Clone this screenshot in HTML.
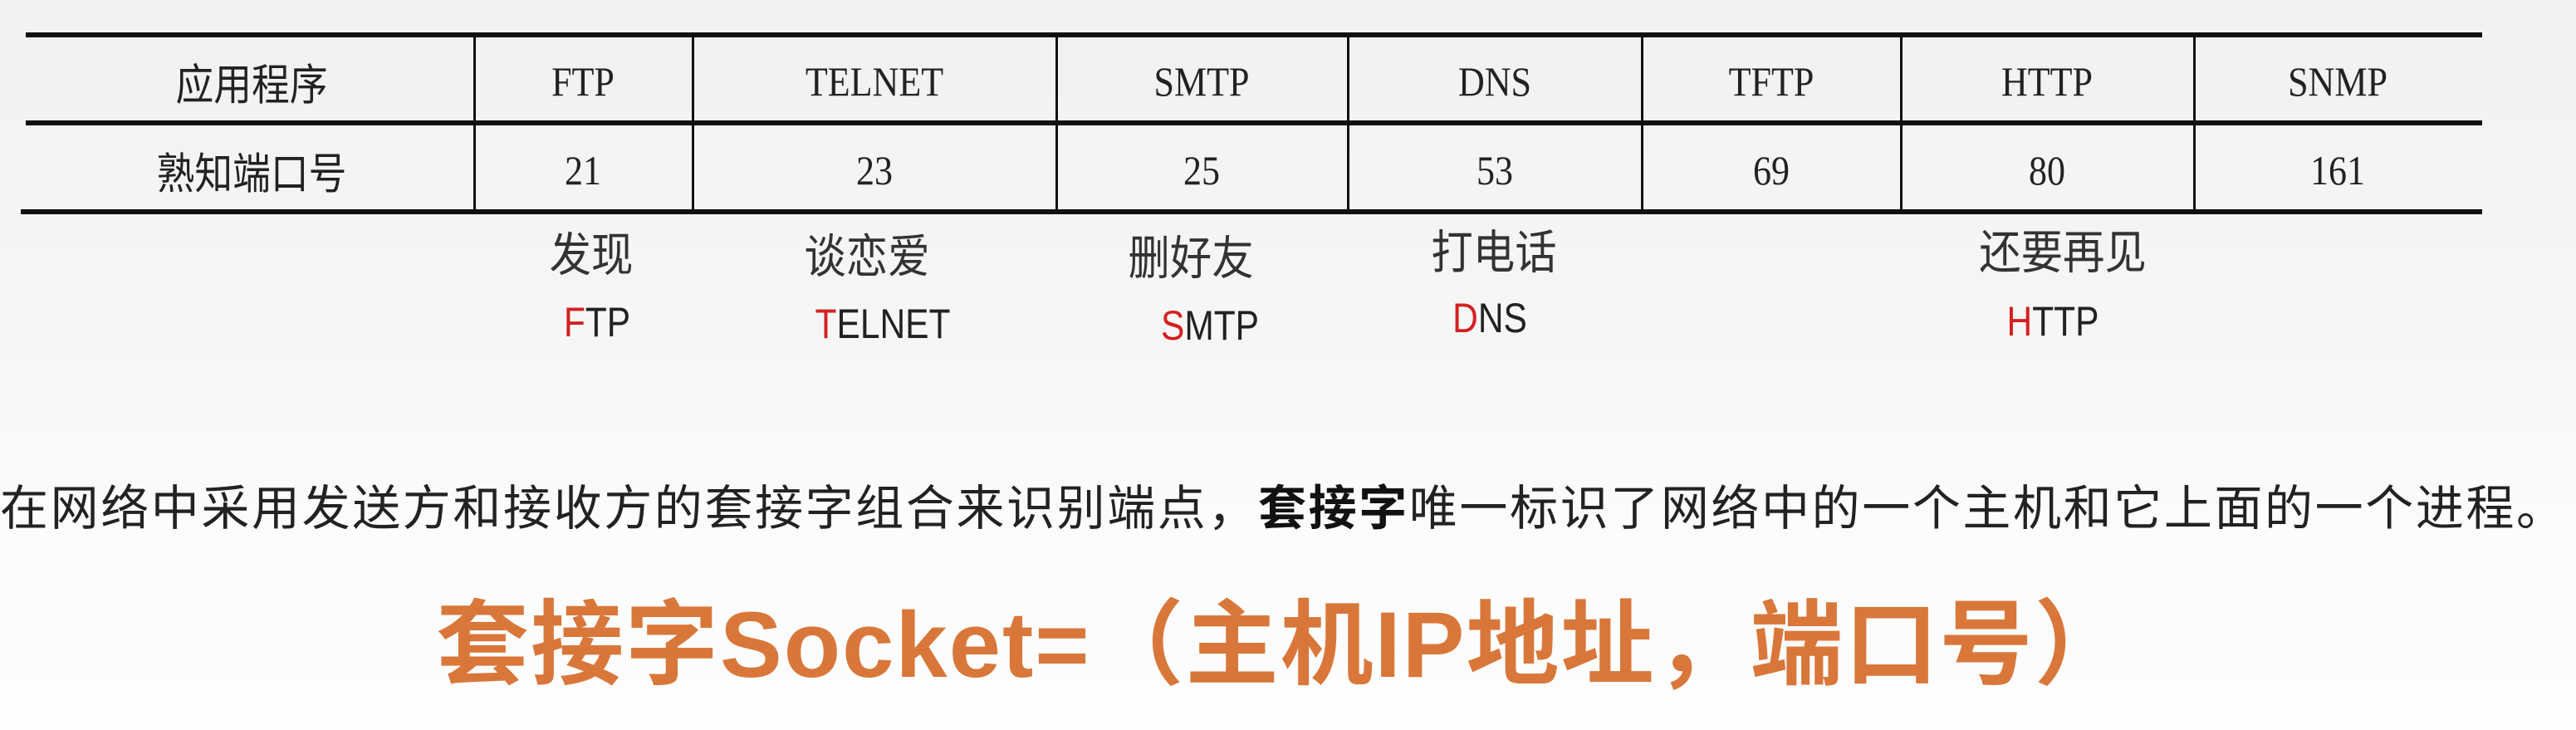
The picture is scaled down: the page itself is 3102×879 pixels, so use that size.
<!DOCTYPE html>
<html><head><meta charset="utf-8"><style>
body{margin:0;width:3102px;height:879px;overflow:hidden;background:linear-gradient(#f1f1f1,#f6f6f6 45%,#fcfcfc 75%,#fdfdfd);position:relative;font-family:"Liberation Sans","Noto Sans CJK SC",sans-serif;}
.h{position:absolute;background:#111;height:6px;left:31px;width:2958px}
.v{position:absolute;background:#111;width:3px;top:42px;height:213px}
.t{position:absolute;transform:translate(-50%,-50%) scaleX(0.88);white-space:nowrap;color:#222;font-size:50px;font-family:"Liberation Serif","Noto Sans CJK SC",serif;}
.c{font-family:"Liberation Sans","Noto Sans CJK SC",sans-serif;font-size:52px;}
.m{position:absolute;transform:translate(-50%,-50%) scaleX(0.9);white-space:nowrap;color:#333;font-size:56px;}
.r{position:absolute;transform:translate(-50%,-50%) scaleX(0.85);white-space:nowrap;color:#222;font-size:50px;}
.r b{color:#d42020;font-weight:normal}
</style></head><body>
<div class="h" style="top:39px"></div>
<div class="h" style="top:145px"></div>
<div class="h" style="top:252px;left:25px;width:2964px"></div>
<div class="v" style="left:570px"></div>
<div class="v" style="left:833px"></div>
<div class="v" style="left:1271px"></div>
<div class="v" style="left:1622px"></div>
<div class="v" style="left:1976px"></div>
<div class="v" style="left:2288px"></div>
<div class="v" style="left:2641px"></div>

<div class="t c" style="left:303px;top:98px">应用程序</div>
<div class="t" style="left:702px;top:98px">FTP</div>
<div class="t" style="left:1053px;top:98px">TELNET</div>
<div class="t" style="left:1447px;top:98px">SMTP</div>
<div class="t" style="left:1800px;top:98px">DNS</div>
<div class="t" style="left:2133px;top:98px">TFTP</div>
<div class="t" style="left:2465px;top:98px">HTTP</div>
<div class="t" style="left:2815px;top:98px">SNMP</div>

<div class="t c" style="left:303px;top:205px">熟知端口号</div>
<div class="t" style="left:702px;top:205px">21</div>
<div class="t" style="left:1053px;top:205px">23</div>
<div class="t" style="left:1447px;top:205px">25</div>
<div class="t" style="left:1800px;top:205px">53</div>
<div class="t" style="left:2133px;top:205px">69</div>
<div class="t" style="left:2465px;top:205px">80</div>
<div class="t" style="left:2815px;top:205px">161</div>

<div class="m" style="left:712px;top:303px">发现</div>
<div class="m" style="left:1044px;top:305px">谈恋爱</div>
<div class="m" style="left:1434px;top:307px">删好友</div>
<div class="m" style="left:1799px;top:300px">打电话</div>
<div class="m" style="left:2484px;top:300px">还要再见</div>

<div class="r" style="left:719px;top:388px"><b>F</b>TP</div>
<div class="r" style="left:1063px;top:390px"><b>T</b>ELNET</div>
<div class="r" style="left:1457px;top:392px"><b>S</b>MTP</div>
<div class="r" style="left:1794px;top:383px"><b>D</b>NS</div>
<div class="r" style="left:2472px;top:387px"><b>H</b>TTP</div>

<div style="position:absolute;left:0;top:578px;font-size:58px;letter-spacing:2.6px;color:#222;white-space:nowrap;line-height:70px">在网络中采用发送方和接收方的套接字组合来识别端点，<span style="font-weight:bold;color:#111">套接字</span>唯一标识了网络中的一个主机和它上面的一个进程。</div>

<div style="position:absolute;left:525px;top:712px;font-size:112px;letter-spacing:2px;font-weight:bold;color:#d9773a;white-space:nowrap;line-height:130px">套接字Socket=（主机IP地址，端口号）</div>
</body></html>
